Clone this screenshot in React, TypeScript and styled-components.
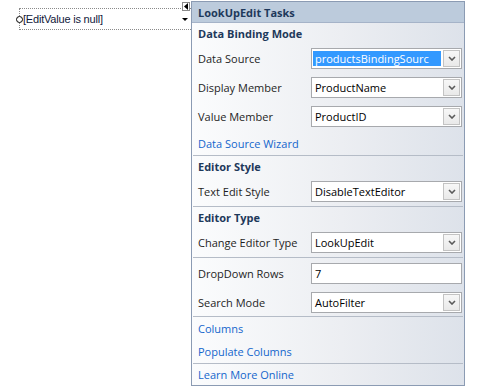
import React from "react";
import styled, { createGlobalStyle } from "styled-components";

const GlobalStyle = createGlobalStyle`
	html, body {
		margin: 0;
		padding: 0;
		background: #ffffff;
	}
	body {
		font-family: "Open Sans", "Noto Sans", sans-serif;
		font-size: 11px;
	}
`;

type Field = { label: string; value: string; kind: "combo" | "text"; selected?: boolean; h: number };

const bindingRows: Field[] = [
	{ label: "Data Source", value: "productsBindingSourc", kind: "combo", selected: true, h: 29 },
	{ label: "Display Member", value: "ProductName", kind: "combo", h: 29 },
	{ label: "Value Member", value: "ProductID", kind: "combo", h: 29 },
];

function Chevron() {
	return (
		<svg width="8" height="5" viewBox="0 0 8 5">
			<path d="M1 1 L4 4 L7 1" fill="none" stroke="#5a5a5a" strokeWidth="1.6" />
		</svg>
	);
}

function Row({ label, value, kind, selected, h }: Field) {
	return (
		<ControlRow $h={h}>
			<Label>{label}</Label>
			<Box>
				<Value $selected={selected}>{value}</Value>
				{kind === "combo" && (
					<DropButton>
						<Chevron />
					</DropButton>
				)}
			</Box>
		</ControlRow>
	);
}

function App() {
	return (
		<>
			<GlobalStyle />
			<Canvas>
				<Designer>
					<EditorBox>
						<Handle />
						<EditorText>[EditValue is null]</EditorText>
						<DropArrow />
					</EditorBox>
					<SmartTag>
						<svg width="4" height="7" viewBox="0 0 4 7">
							<path d="M4 0 L0 3.5 L4 7 Z" fill="#000" />
						</svg>
					</SmartTag>
				</Designer>
				<Panel>
					<Header>LookUpEdit Tasks</Header>
					<Title $h={21}>Data Binding Mode</Title>
					{bindingRows.map((r) => (
						<Row key={r.label} {...r} />
					))}
					<Link $h={24}>Data Source Wizard</Link>
					<Separator />
					<Title $h={21}>Editor Style</Title>
					<Row label="Text Edit Style" value="DisableTextEditor" kind="combo" h={29} />
					<Separator />
					<Title $h={21}>Editor Type</Title>
					<Row label="Change Editor Type" value="LookUpEdit" kind="combo" h={29} />
					<Separator />
					<Row label="DropDown Rows" value="7" kind="text" h={30} />
					<Row label="Search Mode" value="AutoFilter" kind="combo" h={28} />
					<Separator />
					<Link $h={23}>Columns</Link>
					<Link $h={23}>Populate Columns</Link>
					<Separator />
					<Link $h={21}>Learn More Online</Link>
				</Panel>
			</Canvas>
		</>
	);
}

export default App;

const Canvas = styled.div`
	display: flex;
	align-items: flex-start;
	padding-top: 1px;
`;

const Designer = styled.div`
	position: relative;
	width: 191px;
	flex-shrink: 0;
`;

const EditorBox = styled.div`
	position: relative;
	margin: 7px 0 0 19px;
	height: 20px;
	border: 1px dotted #8a8a8a;
	border-right: none;
	display: flex;
	align-items: center;
`;

const Handle = styled.div`
	position: absolute;
	left: -4px;
	top: 7px;
	width: 5px;
	height: 5px;
	border: 1px solid #000;
	border-radius: 50%;
	background: #fff;
`;

const EditorText = styled.span`
	padding-left: 3px;
	font-family: "Liberation Sans", Arial, sans-serif;
	font-size: 11px;
	color: #10183a;
	letter-spacing: -0.2px;
`;

const DropArrow = styled.div`
	position: absolute;
	right: 3px;
	top: 9px;
	width: 0;
	height: 0;
	border-left: 3px solid transparent;
	border-right: 3px solid transparent;
	border-top: 3px solid #000;
`;

const SmartTag = styled.div`
	position: absolute;
	left: 182px;
	top: 1px;
	width: 8px;
	height: 9px;
	box-sizing: border-box;
	border: 1px solid #8a8a8a;
	background: #fff;
	display: flex;
	align-items: center;
	justify-content: center;
`;

const Panel = styled.div`
	width: 274px;
	box-sizing: border-box;
	border: 1px solid #8b9bb3;
	background: linear-gradient(to right, #fbfcfd 0%, #eceef2 55%, #dde2ea 100%);
	display: flex;
	flex-direction: column;
	color: #1e1e1e;
`;

const Header = styled.div`
	height: 20px;
	border-bottom: 1px solid #a5b3c8;
	background: #bccbdc;
	padding-left: 6px;
	display: flex;
	align-items: center;
	font-weight: 700;
	color: #1e395b;
`;

const Title = styled.div<{ $h: number }>`
	height: ${(p) => p.$h}px;
	padding-left: 6px;
	display: flex;
	align-items: center;
	font-weight: 700;
	color: #1e395b;
`;

const ControlRow = styled.div<{ $h: number }>`
	height: ${(p) => p.$h}px;
	padding: 0 2px 0 6px;
	display: grid;
	grid-template-columns: 113px 1fr;
	align-items: center;
`;

const Label = styled.div`
	color: #1e1e1e;
	white-space: nowrap;
`;

const Box = styled.div`
	height: 21px;
	box-sizing: border-box;
	border: 1px solid #a7a9ad;
	background: #fff;
	display: flex;
	align-items: stretch;
	padding: 1px;
	gap: 2px;
`;

const Value = styled.div<{ $selected?: boolean }>`
	flex: 1;
	display: flex;
	align-items: center;
	padding-left: 2px;
	white-space: nowrap;
	overflow: hidden;
	color: ${(p) => (p.$selected ? "#ffffff" : "#000000")};
	background: ${(p) => (p.$selected ? "#3399ff" : "transparent")};
	margin: ${(p) => (p.$selected ? "1px 0" : "0")};
`;

const DropButton = styled.div`
	width: 17px;
	box-sizing: border-box;
	border: 1px solid #c3c3c3;
	background: linear-gradient(#f7f7f7, #e9e9e9);
	display: flex;
	align-items: center;
	justify-content: center;
`;

const Link = styled.div<{ $h: number }>`
	height: ${(p) => p.$h}px;
	padding-left: 6px;
	display: flex;
	align-items: center;
	color: #1466cc;
	cursor: pointer;
`;

const Separator = styled.div`
	height: 1px;
	margin: 0 1px;
	background: #b5bcc7;
`;
